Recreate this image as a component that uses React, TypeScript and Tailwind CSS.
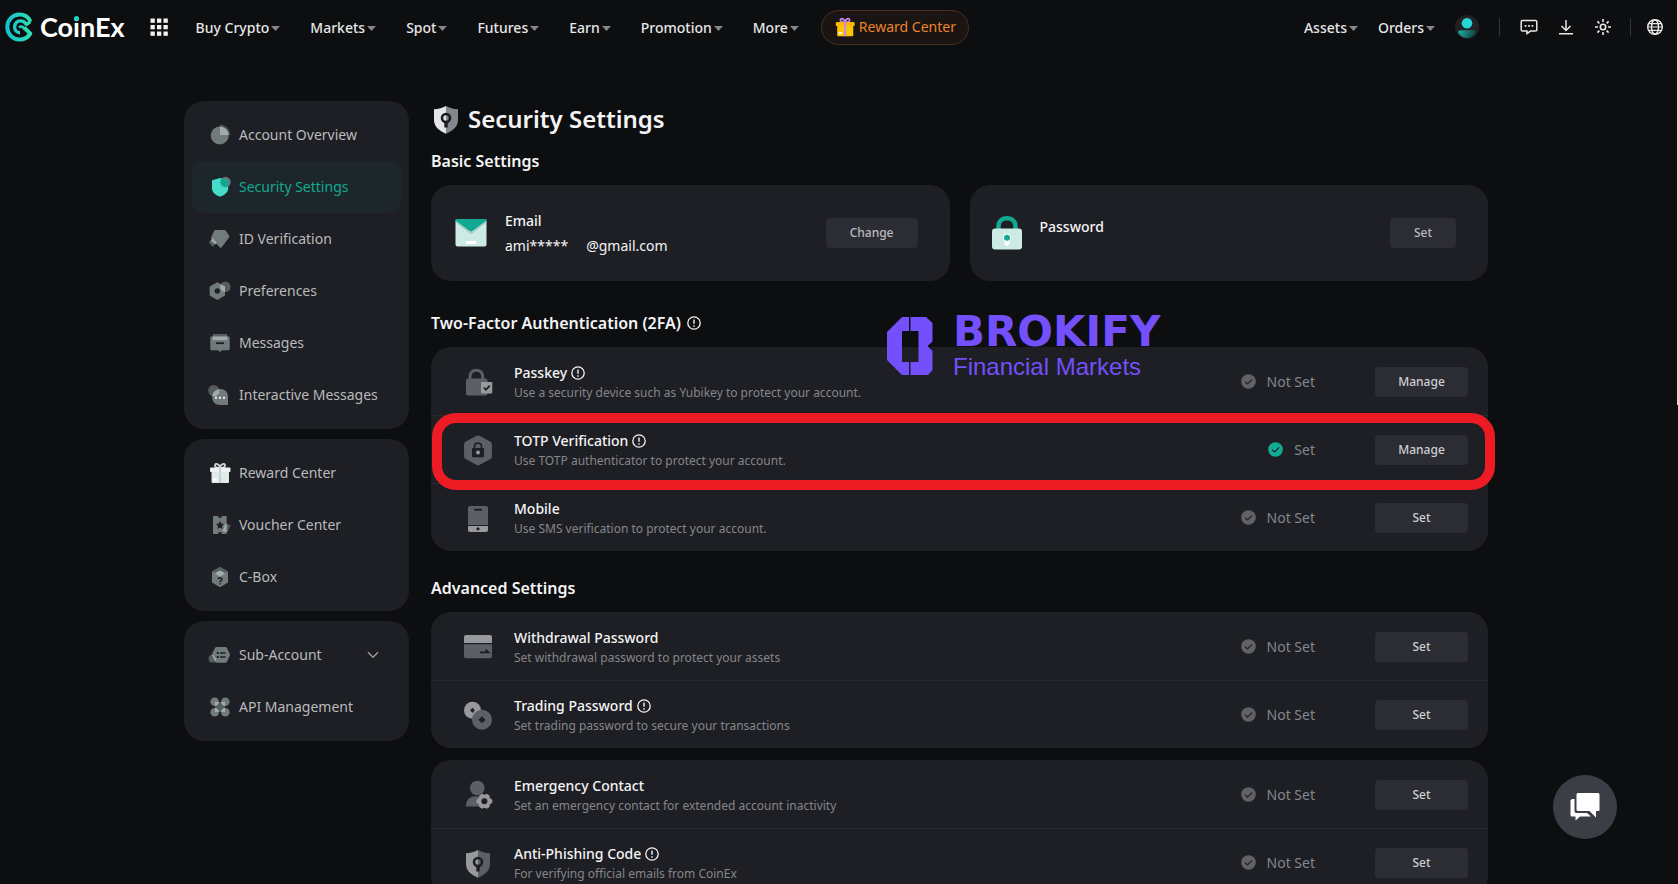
import type { ReactNode } from 'react'

const PANEL = 'rounded-[20px] bg-[#1e1f24]'

/* ---------- header icons ---------- */

function LogoMark() {
  return (
    <svg width="28" height="30" viewBox="0 0 28 30" fill="none" aria-hidden="true">
      <defs>
        <linearGradient id="logo" x1="0" y1="15" x2="28" y2="15" gradientUnits="userSpaceOnUse">
          <stop stopColor="#12bfd0" />
          <stop offset="1" stopColor="#2fe0b0" />
        </linearGradient>
      </defs>
      <g stroke="url(#logo)" strokeWidth="4" strokeLinejoin="round">
        <path d="M25.5 9.5C23.4 5 19.200 2.500 14.500 2.500 7.600 2.500 2.300 8 2.300 15S7.600 27.500 14.500 27.500C19 27.500 22.800 25.600 25.300 21.600L19.300 15.600" />
        <path d="M25.500 9.500 21.500 12.500C19.700 9.800 17.700 8.900 15.500 8.900 12 8.900 9.600 11.600 9.600 15S12 20.800 15 20.800" strokeWidth="3.400" />
        <path d="M19.500 17.500C18.500 14.500 16 13.600 14 15.500" strokeWidth="2.600" />
      </g>
    </svg>
  )
}

function GridIcon() {
  return (
    <svg width="18" height="18" viewBox="0 0 18 18" fill="#f2f2f2" aria-hidden="true">
      {[0.5, 7, 13.5].map(y => [0.5, 7, 13.5].map(x => <rect key={`${x}-${y}`} x={x} y={y} width="4.300" height="4.300" />))}
    </svg>
  )
}

function Caret() {
  return (
    <svg width="9" height="5" viewBox="0 0 9 5" fill="#85868a" aria-hidden="true">
      <path d="M0 0h9L4.500 5z" />
    </svg>
  )
}

function Gift({ box, lid, ribbon, tag, size }: { box: string; lid: string; ribbon: string; tag: string; size: number }) {
  return (
    <svg width={size} height={size} viewBox="0 0 24 24" fill="none" className="shrink-0" aria-hidden="true">
      <path d="M12 6.500C9 7.500 6.500 6 7 4c.7-2 4.300-1.300 5 2.500.7-3.800 4.300-4.500 5-2.500.5 2-2 3.500-5 2.500z" stroke={ribbon} strokeWidth="1.900" />
      <rect x="3.500" y="9" width="17.500" height="13" rx="1" fill={box} />
      <rect x="2" y="6.500" width="20.500" height="4.500" rx="1" fill={lid} />
      <rect x="11" y="6.500" width="2.300" height="15.500" fill={ribbon} />
      <rect x="5" y="17.500" width="4" height="2.300" rx=".5" fill={tag} />
    </svg>
  )
}

function Avatar() {
  return (
    <svg width="24" height="24" viewBox="0 0 24 24" aria-hidden="true">
      <defs>
        <linearGradient id="avatar" x1="3" y1="15" x2="20" y2="22" gradientUnits="userSpaceOnUse">
          <stop stopColor="#1fb5a6" />
          <stop offset="1" stopColor="#123f40" />
        </linearGradient>
      </defs>
      <circle cx="12" cy="12" r="12" fill="#212226" />
      <circle cx="12" cy="8.200" r="5.300" fill="#27d5d6" />
      <path d="M3.200 17.500c0-1.500 1-2.200 2.500-2.200h12.600c1.700 0 2.700.8 2.500 2.400A11 11 0 0 1 12 23a11 11 0 0 1-8.800-5.500z" fill="url(#avatar)" />
    </svg>
  )
}

function ChatIcon() {
  return (
    <svg width="18" height="18" viewBox="0 0 18 18" fill="none" stroke="#e9e9ea" strokeWidth="1.500" aria-hidden="true">
      <path d="M2.500 2.500h13a1.300 1.300 0 0 1 1.300 1.300v8a1.300 1.300 0 0 1-1.300 1.300H10.500L7 15.500v-2.400H2.500a1.300 1.300 0 0 1-1.300-1.300v-8A1.300 1.300 0 0 1 2.500 2.500z" />
      <path d="M4.700 7.900h1.800M8.100 7.900h1.800M11.500 7.900h1.800" strokeWidth="1.800" />
    </svg>
  )
}

function DownloadIcon() {
  return (
    <svg width="16" height="18" viewBox="0 0 16 18" fill="none" stroke="#e9e9ea" strokeWidth="1.500" aria-hidden="true">
      <path d="M8 2v10.500M3.500 8 8 12.500 12.500 8M1 15.800h14" />
    </svg>
  )
}

function SunIcon() {
  return (
    <svg width="18" height="18" viewBox="0 0 18 18" fill="none" stroke="#e9e9ea" strokeWidth="1.600" aria-hidden="true">
      <circle cx="9" cy="9" r="2.700" />
      <path d="M9 1v3M9 14v3M1 9h3M14 9h3M3.400 3.400l2 2M12.600 12.600l2 2M3.400 14.600l2-2M12.600 5.400l2-2" />
    </svg>
  )
}

function GlobeIcon() {
  return (
    <svg width="18" height="18" viewBox="0 0 18 18" fill="none" stroke="#e9e9ea" strokeWidth="1.400" aria-hidden="true">
      <circle cx="9" cy="9" r="7.300" />
      <ellipse cx="9" cy="9" rx="3.500" ry="7.300" />
      <path d="M2.600 5.700h12.800M2.600 12.300h12.800M1.700 9h14.600" strokeWidth="1.200" />
    </svg>
  )
}

/* ---------- sidebar icons ---------- */

const G = '#727b7c'
const L = '#a3aaab'

function Glyph({ children }: { children: ReactNode }) {
  return (
    <svg width="24" height="24" viewBox="0 0 24 24" fill={G} className="shrink-0" aria-hidden="true">
      {children}
    </svg>
  )
}

const icons = {
  overview: (
    <Glyph>
      <path d="M12 12V1.800A10.200 10.200 0 0 1 22.200 12z" fill="#50585a" />
      <circle cx="11.700" cy="12.500" r="9" />
      <path d="M12 12V3.500a9 9 0 0 1 8.700 8.500z" fill={L} />
    </Glyph>
  ),
  security: (
    <Glyph>
      <clipPath id="shield-clip">
        <path d="M4 5.200 12 3l8.200 2.200v8.300c0 4.200-4 6.700-8.200 8.200-4.200-1.500-8-4-8-8.200z" />
      </clipPath>
      <circle cx="17.500" cy="7" r="5.200" fill="#6a7475" />
      <path d="M4 5.200 12 3l8.200 2.200v8.300c0 4.200-4 6.700-8.200 8.200-4.200-1.500-8-4-8-8.200z" fill="#45dbc8" />
      <circle cx="17.500" cy="7" r="5.200" fill="#12a78e" clipPath="url(#shield-clip)" />
    </Glyph>
  ),
  id: (
    <Glyph>
      <path d="M7.500 3h9.200c.5 0 .9.300 1.200.7l3.200 5c.3.600.3 1.200-.1 1.700l-7.300 9.800c-.6.700-1.400.7-2 0L3.500 12c-.5-.7-.6-1.300-.2-2l3-6.300c.3-.5.700-.7 1.200-.7z" />
      <path d="m4.800 11.300 4 4.200-4 4.200-4-4.200z" fill="#59615f" />
      <path d="m4.800 11.300 4 4.200-1.600 1.700-4.600-3.600z" fill={L} />
    </Glyph>
  ),
  preferences: (
    <Glyph>
      <circle cx="17.300" cy="7.700" r="5.300" fill="#545c5e" />
      <path fillRule="evenodd" d="M9.300 3.300 17 7.500v9L9.300 21 1.700 16.500v-9zM9.300 9.300a2.700 2.700 0 1 0 0 5.400 2.700 2.700 0 0 0 0-5.400z" />
      <path d="M12.800 5.200 17 7.500v5.400a5.300 5.300 0 0 1-4.200-7.700z" fill={L} />
    </Glyph>
  ),
  messages: (
    <Glyph>
      <rect x="4.700" y="3" width="14.600" height="6" rx="1" fill="#566062" />
      <path d="M3.500 5.500h17c.7 0 1.200.5 1.200 1.200V18c0 .7-.5 1.200-1.200 1.200H14L12 21l-2-1.800H3.500c-.7 0-1.200-.5-1.200-1.200V6.700c0-.7.500-1.200 1.200-1.200z" />
      <path d="M4.700 5.500h14.600V9H4.700z" fill={L} />
      <path d="M8 11.300h8v1.800H8z" fill="#1e1f24" />
    </Glyph>
  ),
  interactive: (
    <Glyph>
      <circle cx="5.700" cy="7.500" r="5.500" fill="#545c5e" />
      <path d="M12.500 6C17 6 20 9.500 20 14v8h-8c-4.500 0-7.800-3-7.800-8s3.800-8 8.300-8z" />
      <path d="M4.200 13A8.500 8.500 0 0 1 11.200 6.200 5.500 5.500 0 0 1 4.200 13z" fill={L} />
      <path d="M7 13.700h2v2H7zM11 13.700h2v2h-2zM15 13.700h2v2h-2z" fill="#f0f2f2" />
    </Glyph>
  ),
  reward: <Gift size={24} box="#e3eaea" lid="#eef4f4" ribbon="#c9d2d2" tag="#ffffff" />,
  voucher: (
    <Glyph>
      <path d="M6 3h4a2 2 0 0 0 4 0h3.700c.6 0 1 .4 1 1v16c0 .6-.4 1-1 1H14a2 2 0 0 0-4 0H6c-.6 0-1-.4-1-1V4c0-.6.4-1 1-1z" />
      <path d="m12 8 1.300 2.500 2.700.5-1.900 2 .4 2.900L12 14.600 9.500 15.900l.4-2.900L8 11l2.700-.5z" fill="#1e1f24" />
      <path d="m17.500 10.500 5 1.800-3.200 7.200-4.800-1.800z" fill="#566062" />
      <path d="m17.500 10.500 1.200.5v8.200l-4.200-1.500z" fill={L} />
    </Glyph>
  ),
  cbox: (
    <Glyph>
      <path d="M12 2 20 6.500v11L12 22.300 4 17.500v-11z" />
      <path d="M12 2 20 6.500 12 11 4 6.500z" fill="#566062" />
      <path d="m12 5.500 5.500 2.700L12 11.500 6.500 8.200z" fill={L} />
      <path d="M10 14.200c.2-1.600 4-1.700 4 .2 0 1.200-2 1.200-2 2.800M12 18.200v1.400" fill="none" stroke="#1e1f24" strokeWidth="1.500" />
    </Glyph>
  ),
  sub: (
    <Glyph>
      <path d="M8.500 4h9c.6 0 1 .2 1.300.7l3 6.300c.3.500.3 1 0 1.500l-3 6.500c-.3.500-.7.700-1.300.7h-9c-.6 0-1-.2-1.300-.7L4 12.500c-.3-.5-.3-1 0-1.500l3.200-6.300c.3-.5.700-.7 1.300-.7z" />
      <circle cx="4.500" cy="15.700" r="3.900" fill="#566062" />
      <path d="m4 12 1.600-.2L8.400 16l-1 2.400z" fill={L} />
      <path d="M8.800 9h2v2h-2zM12 9.300h5.500v1.500H12zM8.800 13h2v2h-2zM12 13.300h5.500v1.500H12z" fill="#1e1f24" />
    </Glyph>
  ),
  api: (
    <Glyph>
      <circle cx="6.700" cy="6.700" r="4.300" />
      <circle cx="17.300" cy="6.700" r="4.300" />
      <circle cx="6.700" cy="17.300" r="4.300" />
      <circle cx="17.300" cy="17.300" r="4.300" />
      <rect x="7" y="7" width="10" height="10" rx="1.500" fill="#566062" />
      <path d="M7 10.900A4.300 4.300 0 0 0 10.900 7H7zM17 10.900A4.300 4.300 0 0 1 13.100 7H17zM7 13.100a4.300 4.300 0 0 1 3.900 3.900H7zM17 13.100a4.300 4.300 0 0 0-3.900 3.900H17z" fill={L} />
    </Glyph>
  ),
}

/* ---------- settings icons ---------- */

const D = '#5d5f66'
const M = '#98999d'

function Tile({ children }: { children: ReactNode }) {
  return (
    <svg width="30" height="30" viewBox="0 0 30 30" fill={D} className="shrink-0 overflow-visible" aria-hidden="true">
      {children}
    </svg>
  )
}

function ShieldIcon({ left, right, hole }: { left: string; right: string; hole: string }) {
  return (
    <Tile>
      <path d="M15 2C11.500 4 7.500 5 3 5.200V16c0 6.500 5 10.800 12 13.700z" fill={left} />
      <path d="M15 2c3.500 2 7.500 3 12 3.200V16c0 6.500-5 10.800-12 13.700z" fill={right} />
      <circle cx="15" cy="14" r="4" fill="none" stroke={hole} strokeWidth="2.600" />
      <path d="M15 17.500v6" stroke={hole} strokeWidth="3.400" />
    </Tile>
  )
}

const tiles = {
  passkey: (
    <Tile>
      <path d="M7 13V9.500C7 5.500 9.700 3.300 13.300 3.300s6.400 2.200 6.400 6.200V13" fill="none" stroke={D} strokeWidth="3" />
      <rect x="3" y="11.500" width="21.500" height="17" rx="2" />
      <rect x="18" y="15" width="11.300" height="11.500" rx="1" fill={M} />
      <path d="m20.700 20.500 2.200 2.200 4-4" fill="none" stroke="#1e1f24" strokeWidth="1.700" />
    </Tile>
  ),
  totp: (
    <Tile>
      <path d="M13.700.8a2.600 2.600 0 0 1 2.600 0l11.200 6a2.600 2.600 0 0 1 1.400 2.400v12.600c0 1-.5 1.800-1.400 2.300l-11.200 6a2.600 2.600 0 0 1-2.600 0l-11.200-6A2.600 2.600 0 0 1 1.100 21.800V9.200c0-1 .5-1.900 1.400-2.400z" />
      <path d="M11.500 13.500v-2.200c0-2 1.300-3.100 3.500-3.100s3.500 1.100 3.500 3.100v2.200" fill="none" stroke="#1e1f24" strokeWidth="1.700" />
      <rect x="9" y="13" width="12" height="9.300" rx=".8" fill="#1e1f24" />
      <circle cx="15" cy="17.500" r="2" fill={M} />
    </Tile>
  ),
  mobile: (
    <Tile>
      <path d="M7 3h16a2 2 0 0 1 2 2v17H5V5c0-1.100.9-2 2-2z" />
      <path d="M5 23h20v4a2 2 0 0 1-2 2H7a2 2 0 0 1-2-2z" fill={M} />
      <rect x="11" y="5.700" width="8" height="2" rx="1" fill="#1e1f24" />
      <circle cx="15" cy="25.800" r="1.600" fill="#1e1f24" />
    </Tile>
  ),
  withdrawal: (
    <Tile>
      <path d="M3 3h24a2 2 0 0 1 2 2v6H1V5c0-1.100.9-2 2-2z" fill={M} />
      <path d="M1 12.300h28v12a2 2 0 0 1-2 2H3a2 2 0 0 1-2-2z" />
      <path d="M17 20.300h8.500L22.500 17.700" fill="none" stroke="#1e1f24" strokeWidth="1.700" />
    </Tile>
  ),
  trading: (
    <Tile>
      <circle cx="9.500" cy="10.300" r="8.500" fill={M} />
      <path d="m9.500 7.700 2.400 2.600-2.400 2.600-2.400-2.600z" fill="#1e1f24" />
      <circle cx="19" cy="19.700" r="10" />
      <path d="m19 16.200 3.500 3.500-3.500 3.500-3.500-3.500z" fill="#1e1f24" />
    </Tile>
  ),
  emergency: (
    <Tile>
      <circle cx="14.300" cy="8" r="7.300" />
      <path d="M3 26.500C3 19.500 7 16.300 13 16.300h6v10.200z" />
      <path d="m19 13.800 2.400 1 2.400-1 2.700 1.600.3 2.500 2.500 1.900v2.900l-2.500 1.900-.3 2.500-2.700 1.600-2.400-1-2.400 1-2.700-1.600-.3-2.500-2.500-1.900v-2.900l2.500-1.900.3-2.500z" fill={M} />
      <circle cx="21.400" cy="21.300" r="3" fill="#1e1f24" />
    </Tile>
  ),
  phishing: <ShieldIcon left={M} right={D} hole="#1e1f24" />,
}

function InfoIcon() {
  return (
    <svg width="14" height="14" viewBox="0 0 14 14" fill="none" stroke="#f4f4f5" strokeWidth="1.300" aria-hidden="true">
      <circle cx="7" cy="7" r="6.200" />
      <path d="M7 3.500v4.300M7 9.200v1.500" strokeWidth="1.400" />
    </svg>
  )
}

function EmailIcon() {
  return (
    <svg width="32" height="28" viewBox="0 0 32 28" className="shrink-0" aria-hidden="true">
      <rect x=".5" y=".5" width="31" height="27" rx="2" fill="#cdebe5" />
      <path d="M2 0h28c1 0 1.700.4 2 1.200L17.200 12.300a2 2 0 0 1-2.400 0L0 1.200C.3.400 1 0 2 0z" fill="#12a992" />
      <path d="m.5 2.500 14.300 11.200a2 2 0 0 0 2.400 0L31.500 2.500" fill="none" stroke="#8fa9a5" strokeWidth=".8" />
      <rect x="11" y="22" width="10" height="3" rx="1" fill="#fff" />
    </svg>
  )
}

function LockIcon() {
  return (
    <svg width="32" height="34" viewBox="0 0 32 34" className="shrink-0" aria-hidden="true">
      <path d="M6.500 16V10.500c0-5 3.300-8.200 8.500-8.200s8.500 3.200 8.500 8.200V16" fill="none" stroke="#12a992" strokeWidth="4.500" />
      <rect y="12.500" width="30" height="21" rx="3" fill="#cdebe5" />
      <circle cx="15" cy="22" r="4.200" fill="#fff" />
      <rect x="12.700" y="22" width="4.600" height="7.500" rx="2" fill="#fff" />
      <circle cx="15" cy="21.700" r="3" fill="#12a992" />
    </svg>
  )
}

/* ---------- data ---------- */

const NAV = ['Buy Crypto', 'Markets', 'Spot', 'Futures', 'Earn', 'Promotion', 'More']

type MenuItem = { label: string; icon: ReactNode; active?: boolean; expandable?: boolean }

const MENU: MenuItem[][] = [
  [
    { label: 'Account Overview', icon: icons.overview },
    { label: 'Security Settings', icon: icons.security, active: true },
    { label: 'ID Verification', icon: icons.id },
    { label: 'Preferences', icon: icons.preferences },
    { label: 'Messages', icon: icons.messages },
    { label: 'Interactive Messages', icon: icons.interactive },
  ],
  [
    { label: 'Reward Center', icon: icons.reward },
    { label: 'Voucher Center', icon: icons.voucher },
    { label: 'C-Box', icon: icons.cbox },
  ],
  [
    { label: 'Sub-Account', icon: icons.sub, expandable: true },
    { label: 'API Management', icon: icons.api },
  ],
]

type Setting = {
  title: string
  detail: string
  icon: ReactNode
  info?: boolean
  set?: boolean
  action?: string
  marked?: boolean
}

const TWO_FACTOR: Setting[] = [
  { title: 'Passkey', detail: 'Use a security device such as Yubikey to protect your account.', icon: tiles.passkey, info: true, action: 'Manage' },
  { title: 'TOTP Verification', detail: 'Use TOTP authenticator to protect your account.', icon: tiles.totp, info: true, set: true, action: 'Manage', marked: true },
  { title: 'Mobile', detail: 'Use SMS verification to protect your account.', icon: tiles.mobile },
]

const PASSWORDS: Setting[] = [
  { title: 'Withdrawal Password', detail: 'Set withdrawal password to protect your assets', icon: tiles.withdrawal },
  { title: 'Trading Password', detail: 'Set trading password to secure your transactions', icon: tiles.trading, info: true },
]

const SAFETY: Setting[] = [
  { title: 'Emergency Contact', detail: 'Set an emergency contact for extended account inactivity', icon: tiles.emergency },
  { title: 'Anti-Phishing Code', detail: 'For verifying official emails from CoinEx', icon: tiles.phishing, info: true },
]

/* ---------- sections ---------- */

function NavButton({ label }: { label: string }) {
  return (
    <button className="flex items-center gap-0.5 pt-0.5 text-sm font-medium whitespace-nowrap text-[#e6e6e7]">
      {label}
      <Caret />
    </button>
  )
}

function Header() {
  return (
    <header className="flex h-[54px] items-center pr-[14px] pl-[5px]">
      <a href="#" className="flex items-center gap-[7px]" aria-label="CoinEx">
        <LogoMark />
        <span className="font-[Lato,sans-serif] text-[27px] leading-8 font-bold text-white">
          Co
          <span className="relative">
            i
            <span className="absolute top-1.5 left-px size-[5px] rounded-full bg-[#1fd3c0]" />
          </span>
          nEx
        </span>
      </a>
      <button className="ml-[25px]" aria-label="All products">
        <GridIcon />
      </button>
      <nav className="ml-7 flex items-center gap-[30px]">
        {NAV.map(label => (
          <NavButton key={label} label={label} />
        ))}
      </nav>
      <a href="#" className="ml-[22px] flex h-[35px] items-center gap-[3px] rounded-full border border-[#49301f] bg-[#1a1413] px-3 text-sm whitespace-nowrap text-[#ea8428]">
        <Gift size={22} box="#fdc500" lid="#ffb800" ribbon="#c58be8" tag="#fff6d5" />
        Reward Center
      </a>

      <div className="ml-auto flex items-center">
        <div className="flex items-center gap-5">
          <NavButton label="Assets" />
          <NavButton label="Orders" />
          <button aria-label="Account"><Avatar /></button>
        </div>
        <span className="mx-5 h-[18px] w-px bg-[#343539]" />
        <div className="flex items-center gap-5">
          <button aria-label="Notifications"><ChatIcon /></button>
          <button aria-label="Download"><DownloadIcon /></button>
          <button aria-label="Theme"><SunIcon /></button>
        </div>
        <span className="mr-[15px] ml-[18px] h-[18px] w-px bg-[#343539]" />
        <button aria-label="Language"><GlobeIcon /></button>
      </div>
    </header>
  )
}

function Sidebar() {
  return (
    <aside className="flex w-[225px] shrink-0 flex-col gap-2.5">
      {MENU.map(group => (
        <ul key={group[0].label} className={`${PANEL} p-2`}>
          {group.map(item => (
            <li key={item.label}>
              <a
                href="#"
                className={`flex h-[52px] items-center gap-[7px] rounded-[10px] pr-[22px] pl-4 text-sm whitespace-nowrap ${item.active ? 'bg-[#1d262a] text-[#12a98f]' : 'text-[#b9babd]'}`}
              >
                {item.icon}
                {item.label}
                {item.expandable && (
                  <svg width="12" height="8" viewBox="0 0 12 8" fill="none" stroke="#98999d" strokeWidth="1.500" className="ml-auto" aria-hidden="true">
                    <path d="m1 1.300 5 5 5-5" />
                  </svg>
                )}
              </a>
            </li>
          ))}
        </ul>
      ))}
    </aside>
  )
}

function SettingRow({ item }: { item: Setting }) {
  return (
    <li className="relative flex h-[68px] items-center border-t border-[#292a2f] pr-5 pl-8 first:border-t-transparent">
      {item.icon}
      <div className="ml-[21px] pt-0.5">
        <p className="flex items-center gap-1 text-sm leading-5 font-medium text-[#f4f4f5]">
          {item.title}
          {item.info && <InfoIcon />}
        </p>
        <p className="text-xs leading-5 text-[#85868a]">{item.detail}</p>
      </div>
      <span className="ml-auto flex items-center gap-[11px] text-sm text-[#85868a]">
        <svg width="15" height="15" viewBox="0 0 15 15" fill="none" aria-hidden="true">
          <circle cx="7.500" cy="7.500" r="7.300" fill={item.set ? '#12ab94' : '#616267'} />
          <path d="m4 7.600 2.500 2.400 4.700-4.600" stroke="#1e1f24" strokeWidth="1.100" />
        </svg>
        {item.set ? 'Set' : 'Not Set'}
      </span>
      <button className="ml-[60px] h-[30px] w-[93px] rounded bg-[#2c2c34] text-xs font-medium text-[#cfcfd2]">{item.action ?? 'Set'}</button>
      {item.marked && (
        <span className="pointer-events-none absolute -top-[3px] -right-[7px] -bottom-[7px] left-px z-10 rounded-3xl border-[10px] border-[#ed1c24]" />
      )}
    </li>
  )
}

function SettingList({ items }: { items: Setting[] }) {
  return (
    <ul className={PANEL}>
      {items.map(item => (
        <SettingRow key={item.title} item={item} />
      ))}
    </ul>
  )
}

function Watermark() {
  return (
    <div className="pointer-events-none absolute top-[216px] left-[456px] flex gap-5 text-[#7350fb]">
      <svg width="46" height="58" viewBox="0 0 46 58" fill="currentColor" aria-hidden="true">
        <path d="M15 0h7v14h-7v31h7v13h-7L0 43V15z" />
        <path d="M23.500 0H39l6.500 6v18.500L40.500 29l5 5v19l-4.500 5H23.500V45h8V14h-8z" />
      </svg>
      <div className="whitespace-nowrap">
        <p className="font-['DejaVu_Sans',sans-serif] text-[42px] leading-[30px] font-bold">BROKIFY</p>
        <p className="mt-1 font-['Liberation_Sans',sans-serif] text-2xl leading-8">Financial Markets</p>
      </div>
    </div>
  )
}

export default function App() {
  return (
    <div className="relative min-h-screen overflow-x-hidden bg-[#0d0e10] font-['Noto_Sans',sans-serif]">
      <Header />

      <div className="flex gap-[22px] pt-[47px] pr-[190px] pb-10 pl-[184px]">
        <Sidebar />

        <main className="relative min-w-0 flex-1">
          <h1 className="flex items-center gap-[7px] pt-0.5 text-2xl leading-8 font-semibold text-[#f4f4f5]">
            <ShieldIcon left="#e4e5e9" right="#83868d" hole="#1a1b1e" />
            Security Settings
          </h1>

          <h2 className="mt-3.5 text-base leading-6 font-semibold text-[#f4f4f5]">Basic Settings</h2>
          <div className="mt-3 grid grid-cols-2 gap-5">
            <section className={`${PANEL} flex h-24 items-center pr-8 pl-6`}>
              <EmailIcon />
              <div className="ml-[18px] text-sm leading-[25px] text-[#f4f4f5]">
                <p className="font-medium">Email</p>
                <p className="flex gap-[18px]">
                  <span>ami*****</span>
                  <span>@gmail.com</span>
                </p>
              </div>
              <button className="ml-auto h-[30px] rounded bg-[#2c2c34] px-6 text-xs font-medium text-[#b9babd]">Change</button>
            </section>
            <section className={`${PANEL} flex h-24 items-center pr-8 pl-[22px]`}>
              <LockIcon />
              <p className="ml-4 pb-3.5 text-sm leading-[25px] font-medium text-[#f4f4f5]">Password</p>
              <button className="ml-auto h-[30px] rounded bg-[#2c2c34] px-6 text-xs font-medium text-[#b9babd]">Set</button>
            </section>
          </div>

          <h2 className="mt-[30px] mb-3 flex items-center gap-1.5 text-base leading-6 font-semibold text-[#f4f4f5]">
            Two-Factor Authentication (2FA)
            <InfoIcon />
          </h2>
          <SettingList items={TWO_FACTOR} />

          <h2 className="mt-[25px] mb-3 text-base leading-6 font-semibold text-[#f4f4f5]">Advanced Settings</h2>
          <div className="flex flex-col gap-3">
            <SettingList items={PASSWORDS} />
            <SettingList items={SAFETY} />
          </div>

          <Watermark />
        </main>
      </div>

      <button
        className="fixed right-[61px] bottom-[45px] flex size-16 items-center justify-center rounded-full bg-[#3c3e46]"
        aria-label="Live chat"
      >
        <svg width="30" height="28" viewBox="0 0 30 28" fill="#fff" aria-hidden="true">
          <path d="M8 0h20a1.500 1.500 0 0 1 1.500 1.500V17a1 1 0 0 1-1 1H26v6.500L19.500 18H8a1.500 1.500 0 0 1-1.500-1.500v-15A1.500 1.500 0 0 1 8 0z" />
          <path d="M4.500 6v12.300A1.700 1.700 0 0 0 6.200 20H17l4 3.500H10L5.500 27.500V23.500H2A1.500 1.500 0 0 1 .5 22V8C.5 6.800 1.500 6 2.700 6z" />
        </svg>
      </button>

      <span className="absolute top-0 right-0 h-[405px] w-px bg-[#dcdcdc]" />
    </div>
  )
}
